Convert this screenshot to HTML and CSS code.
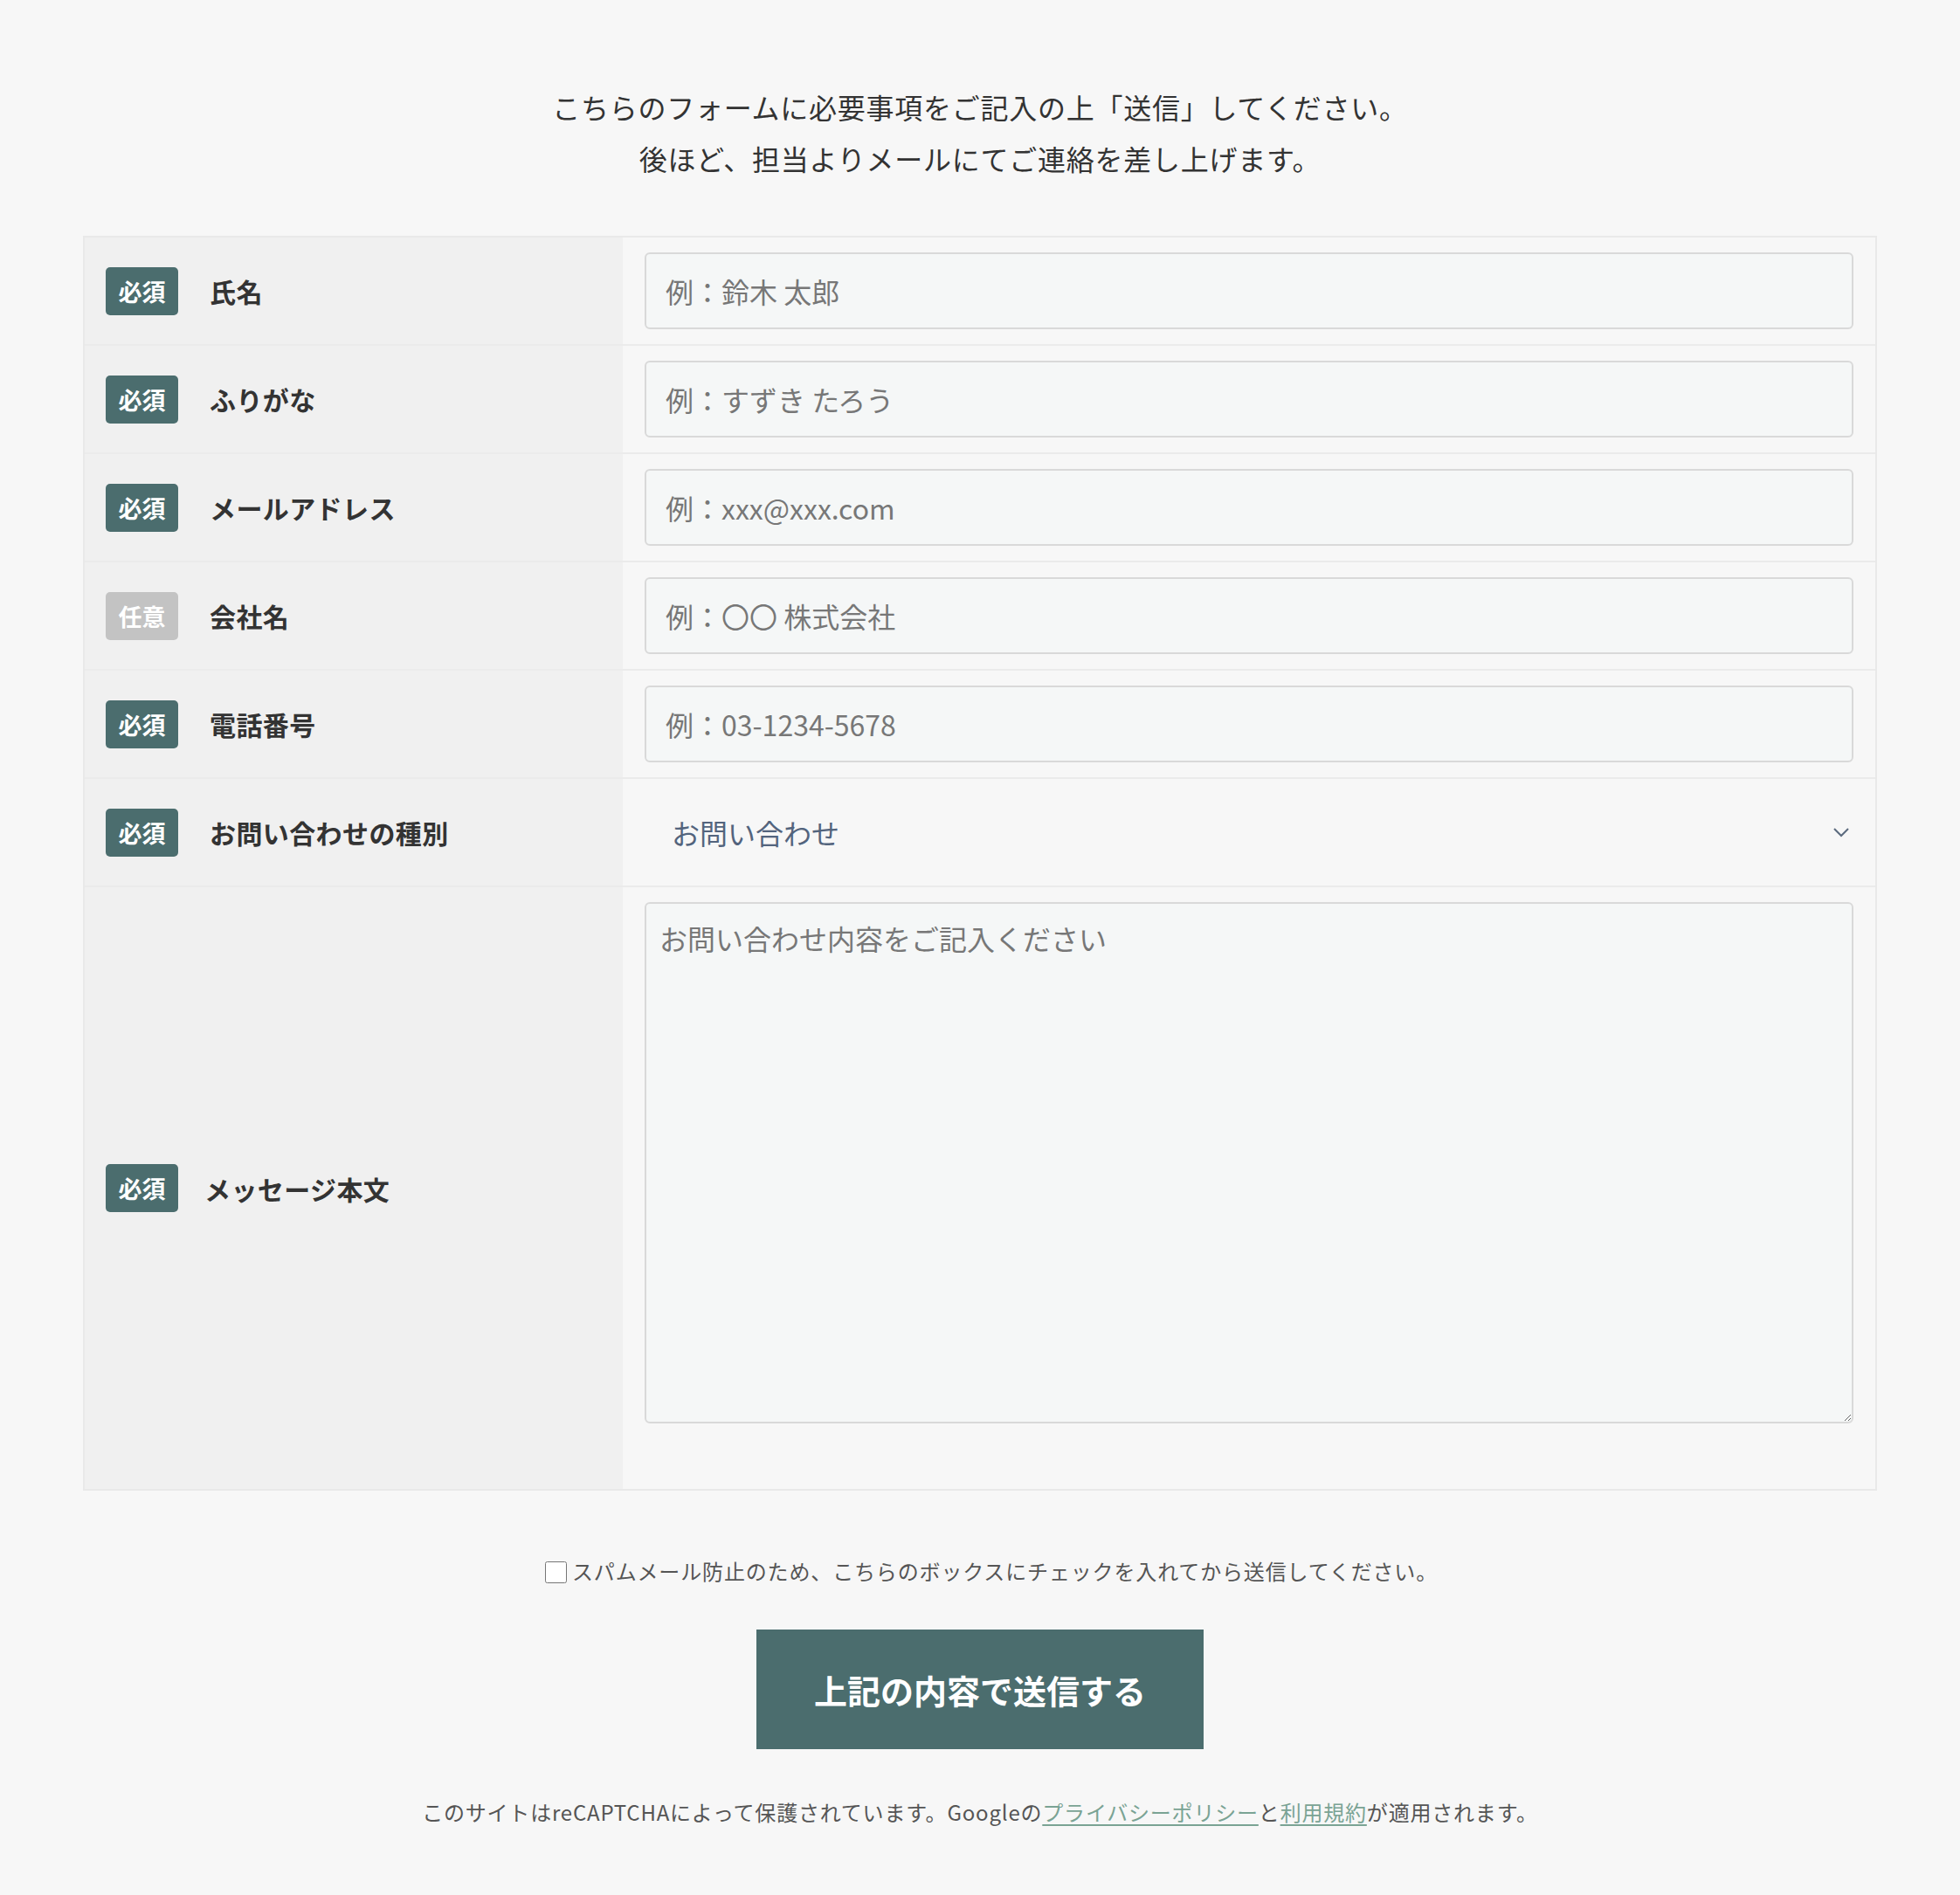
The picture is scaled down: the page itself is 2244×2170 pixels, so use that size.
FILE: index.html
```html
<!DOCTYPE html>
<html lang="ja">
<head>
  <meta charset="UTF-8" />
  <meta name="viewport" content="width=device-width, initial-scale=1.0" />
  <title>お問い合わせ</title>
  <link rel="stylesheet" href="styles.css">
</head>
<body>

<main class="contact">
  <p class="lead">
    こちらのフォームに必要事項をご記入の上「送信」してください。<br>
    後ほど、担当よりメールにてご連絡を差し上げます。
  </p>

  <form class="contact-form" onsubmit="return false;">
    <div class="form-table">

      <div class="form-row">
        <div class="form-label"><span class="badge">必須</span><label for="name">氏名</label></div>
        <div class="form-field"><input type="text" id="name" placeholder="例：鈴木 太郎"></div>
      </div>

      <div class="form-row">
        <div class="form-label"><span class="badge">必須</span><label for="kana">ふりがな</label></div>
        <div class="form-field"><input type="text" id="kana" placeholder="例：すずき たろう"></div>
      </div>

      <div class="form-row">
        <div class="form-label"><span class="badge">必須</span><label for="email">メールアドレス</label></div>
        <div class="form-field"><input type="email" id="email" placeholder="例：xxx@xxx.com"></div>
      </div>

      <div class="form-row">
        <div class="form-label"><span class="badge badge-optional">任意</span><label for="company">会社名</label></div>
        <div class="form-field"><input type="text" id="company" placeholder="例：〇〇 株式会社"></div>
      </div>

      <div class="form-row">
        <div class="form-label"><span class="badge">必須</span><label for="tel">電話番号</label></div>
        <div class="form-field"><input type="tel" id="tel" placeholder="例：03-1234-5678"></div>
      </div>

      <div class="form-row">
        <div class="form-label"><span class="badge">必須</span><label for="type">お問い合わせの種別</label></div>
        <div class="form-field">
          <div class="select-wrap">
            <select id="type">
              <option>お問い合わせ</option>
              <option>資料請求</option>
              <option>その他</option>
            </select>
            <svg class="select-arrow" width="18" height="11" viewBox="0 0 18 11"><polyline points="1,1 9,9 17,1" fill="none" stroke="#5b6a7e" stroke-width="2"/></svg>
          </div>
        </div>
      </div>

      <div class="form-row form-row-last">
        <div class="form-label"><span class="badge">必須</span><label for="message" class="label-tight">メッセージ本文</label></div>
        <div class="form-field"><textarea id="message" placeholder="お問い合わせ内容をご記入ください"></textarea></div>
      </div>

    </div>

    <p class="spam-check">
      <label><input type="checkbox" id="spam">スパムメール防止のため、こちらのボックスにチェックを入れてから送信してください。</label>
    </p>

    <button type="submit" class="submit">上記の内容で送信する</button>
  </form>

  <p class="recaptcha">
    このサイトはreCAPTCHAによって保護されています。Googleの<a href="#">プライバシーポリシー</a>と<a href="#">利用規約</a>が適用されます。
  </p>
</main>

</body>
</html>
```

FILE: styles.css
```css
html, body {
  margin: 0;
  padding: 0;
  background: #f7f7f7;
  color: #333;
  font-family: "Noto Sans CJK JP", "Noto Sans", sans-serif;
  box-sizing: border-box;
}
*, *::before, *::after {
  box-sizing: inherit;
}
.contact {
  padding: 93px 95px 0;
}
.lead {
  margin: 0;
  text-align: center;
  font-size: 32px;
  line-height: 59px;
  letter-spacing: 0.75px;
  color: #333;
}

/* フォーム表 */
.form-table {
  margin-top: 59px;
  border: 2px solid #e9e9e9;
}
.form-row {
  display: grid;
  grid-template-columns: 616px 1fr;
  border-top: 2px solid #ebebeb;
}
.form-row:first-child {
  border-top: none;
}
.form-label {
  display: flex;
  align-items: center;
  padding: 0 24px;
  background: #f0f0f0;
}
.badge {
  display: flex;
  align-items: center;
  justify-content: center;
  flex-shrink: 0;
  width: 83px;
  height: 55px;
  margin-right: 36px;
  border-radius: 5px;
  background: #4b6d6e;
  color: #fff;
  font-size: 27px;
  font-weight: 700;
}
.badge-optional {
  background: #c3c3c3;
}
.form-label label {
  font-size: 30px;
  font-weight: 700;
  letter-spacing: 0.4px;
  color: #333;
}
.form-label .label-tight {
  margin-left: -6px;
}
.form-field {
  padding: 17px 25px;
  background: #f7f7f7;
}
.form-row-last .form-field {
  padding-bottom: 75px;
}
.form-field input,
.form-field textarea {
  display: block;
  width: 100%;
  border: 2px solid #d9d9d9;
  border-radius: 6px;
  background: #f5f7f7;
  color: #333;
  font-family: inherit;
  font-size: 32px;
}
.form-field input {
  height: 88px;
  padding: 0 22px;
}
.form-field textarea {
  height: 597px;
  padding: 15px 15px;
  line-height: 48px;
  resize: vertical;
}
.form-field ::placeholder {
  color: #777;
}
.select-wrap {
  position: relative;
}
.select-wrap select {
  display: block;
  width: 100%;
  height: 88px;
  padding: 0 60px 0 31px;
  border: none;
  background: transparent;
  color: #53647d;
  font-family: inherit;
  font-size: 32px;
  -webkit-appearance: none;
  appearance: none;
}
.select-arrow {
  position: absolute;
  right: 5px;
  top: 39px;
  pointer-events: none;
}

/* 送信まわり */
.spam-check {
  margin: 74px 0 0;
  padding-left: 26px;
  text-align: center;
  font-size: 24px;
  line-height: 36px;
  letter-spacing: 0.85px;
  color: #555;
}
.spam-check input {
  width: 25px;
  height: 25px;
  margin: 0 6px 0 0;
  vertical-align: -4px;
}
.submit {
  display: block;
  width: 512px;
  height: 137px;
  margin: 49px auto 0;
  border: none;
  background: #4b6d6e;
  color: #fff;
  font-family: inherit;
  font-size: 38px;
  font-weight: 700;
  cursor: pointer;
}
.recaptcha {
  margin: 54px 0 0;
  padding-bottom: 77px;
  text-align: center;
  font-size: 24px;
  line-height: 36px;
  letter-spacing: 0.8px;
  color: #555;
}
.recaptcha a {
  color: #7aa394;
  text-decoration: underline;
  text-decoration-thickness: 2px;
  text-underline-offset: 4px;
}
```
